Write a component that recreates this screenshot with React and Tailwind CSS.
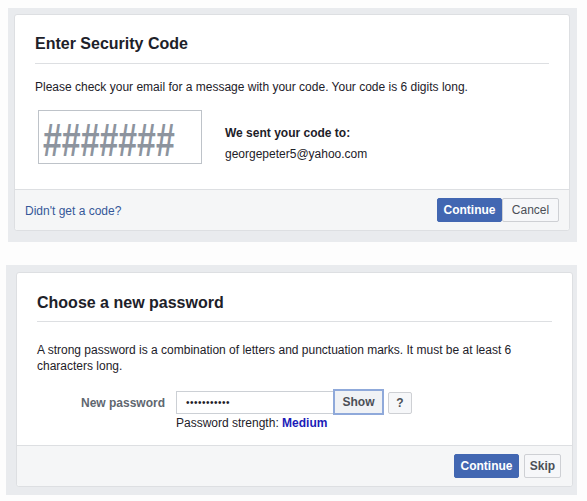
export default function App() {
  const font = { fontFamily: '"Liberation Sans", Arial, Helvetica, sans-serif' };
  return (
    <div className="w-[587px] h-[501px] bg-[#fdfdfd] overflow-hidden text-[#1d2129]" style={font}>
      {/* Top panel */}
      <div className="ml-[8px] mt-[8px] w-[569px] h-[234px] bg-[#e9ebee] pt-[6px] pl-[6px]">
        <div className="w-[556px] h-[217px] bg-white border border-[#dddfe2] rounded-[3px] flex flex-col">
          <div className="px-[20px] flex-1">
            <div className="h-[49px] border-b border-[#dddfe2] flex items-end pb-[9px]">
              <h2 className="text-[16px] font-bold leading-[20px] text-[#1d2129]">Enter Security Code</h2>
            </div>
            <p className="text-[12px] leading-[16px] mt-[15px]">
              Please check your email for a message with your code. Your code is 6 digits long.
            </p>
            <div className="flex mt-[15px] ml-[3px]">
              <div className="w-[164px] h-[54px] border border-[#bec3c9] flex items-center pl-[4px] overflow-hidden">
                <span className="inline-block text-[47px] font-bold leading-none text-[#8d949e] mt-[4px] scale-x-[0.72] origin-left whitespace-nowrap">#######</span>
              </div>
              <div className="ml-[23px] mt-[13px] text-[12px] leading-[21px]">
                <div className="font-bold">We sent your code to:</div>
                <div>georgepeter5@yahoo.com</div>
              </div>
            </div>
          </div>
          <div className="h-[41px] bg-[#f5f6f7] border-t border-[#dddfe2] flex items-center justify-between pl-[10px] pr-[10px] rounded-b-[3px]">
            <a className="text-[12px] text-[#365899] mt-[1px]">Didn't get a code?</a>
            <div className="flex">
              <button className="h-[24px] w-[65px] bg-[#4267b2] border border-[#4267b2] text-white text-[12px] font-bold rounded-[2px]" style={font}>Continue</button>
              <button className="h-[24px] w-[57px] bg-[#f6f7f9] border border-[#ced0d4] text-[#4b4f56] text-[12px] rounded-[2px]" style={font}>Cancel</button>
            </div>
          </div>
        </div>
      </div>

      {/* Bottom panel */}
      <div className="ml-[6px] mt-[23px] w-[571px] h-[230px] bg-[#e9ebee] pt-[7px] pl-[10px]">
        <div className="w-[557px] h-[215px] bg-white border border-[#dddfe2] rounded-[3px] flex flex-col">
          <div className="px-[20px] flex-1">
            <div className="h-[49px] border-b border-[#dddfe2] flex items-end pb-[8px]">
              <h2 className="text-[16px] font-bold leading-[20px] text-[#1d2129]">Choose a new password</h2>
            </div>
            <p className="text-[12px] leading-[16px] mt-[20px]">
              A strong password is a combination of letters and punctuation marks. It must be at least 6
              <br />
              characters long.
            </p>
            <div className="flex mt-[15px]">
              <div className="w-[129px] text-right text-[12px] font-bold text-[#606770] mt-[5px] pr-[1px]">New password</div>
              <div className="ml-[10px]">
                <div className="flex items-center">
                  <div className="w-[157px] h-[23px] border border-[#ccd0d5] border-r-0 flex items-center pl-[9px] text-[10px] tracking-[0.5px] text-[#1d2129]">•••••••••••</div>
                  <button className="w-[51px] h-[26px] bg-[#f0f2f5] border-2 border-[#8fa9da] text-[#4b4f56] text-[12px] font-bold" style={font}>Show</button>
                  <button className="ml-[4px] mt-[2px] w-[24px] h-[22px] bg-[#f6f7f9] border border-[#ced0d4] text-[#4b4f56] text-[12px] font-bold rounded-[2px]" style={font}>?</button>
                </div>
                <div className="text-[12px] leading-[16px]">
                  Password strength: <span className="font-bold text-[#1c1cb8]">Medium</span>
                </div>
              </div>
            </div>
          </div>
          <div className="h-[41px] bg-[#f5f6f7] border-t border-[#dddfe2] flex items-center justify-end pr-[11px] rounded-b-[3px]">
            <button className="h-[24px] w-[65px] bg-[#4267b2] border border-[#4267b2] text-white text-[12px] font-bold rounded-[2px]" style={font}>Continue</button>
            <button className="ml-[5px] h-[24px] w-[37px] bg-[#f6f7f9] border border-[#ced0d4] text-[#4b4f56] text-[12px] font-bold rounded-[2px]" style={font}>Skip</button>
          </div>
        </div>
      </div>
    </div>
  );
}
